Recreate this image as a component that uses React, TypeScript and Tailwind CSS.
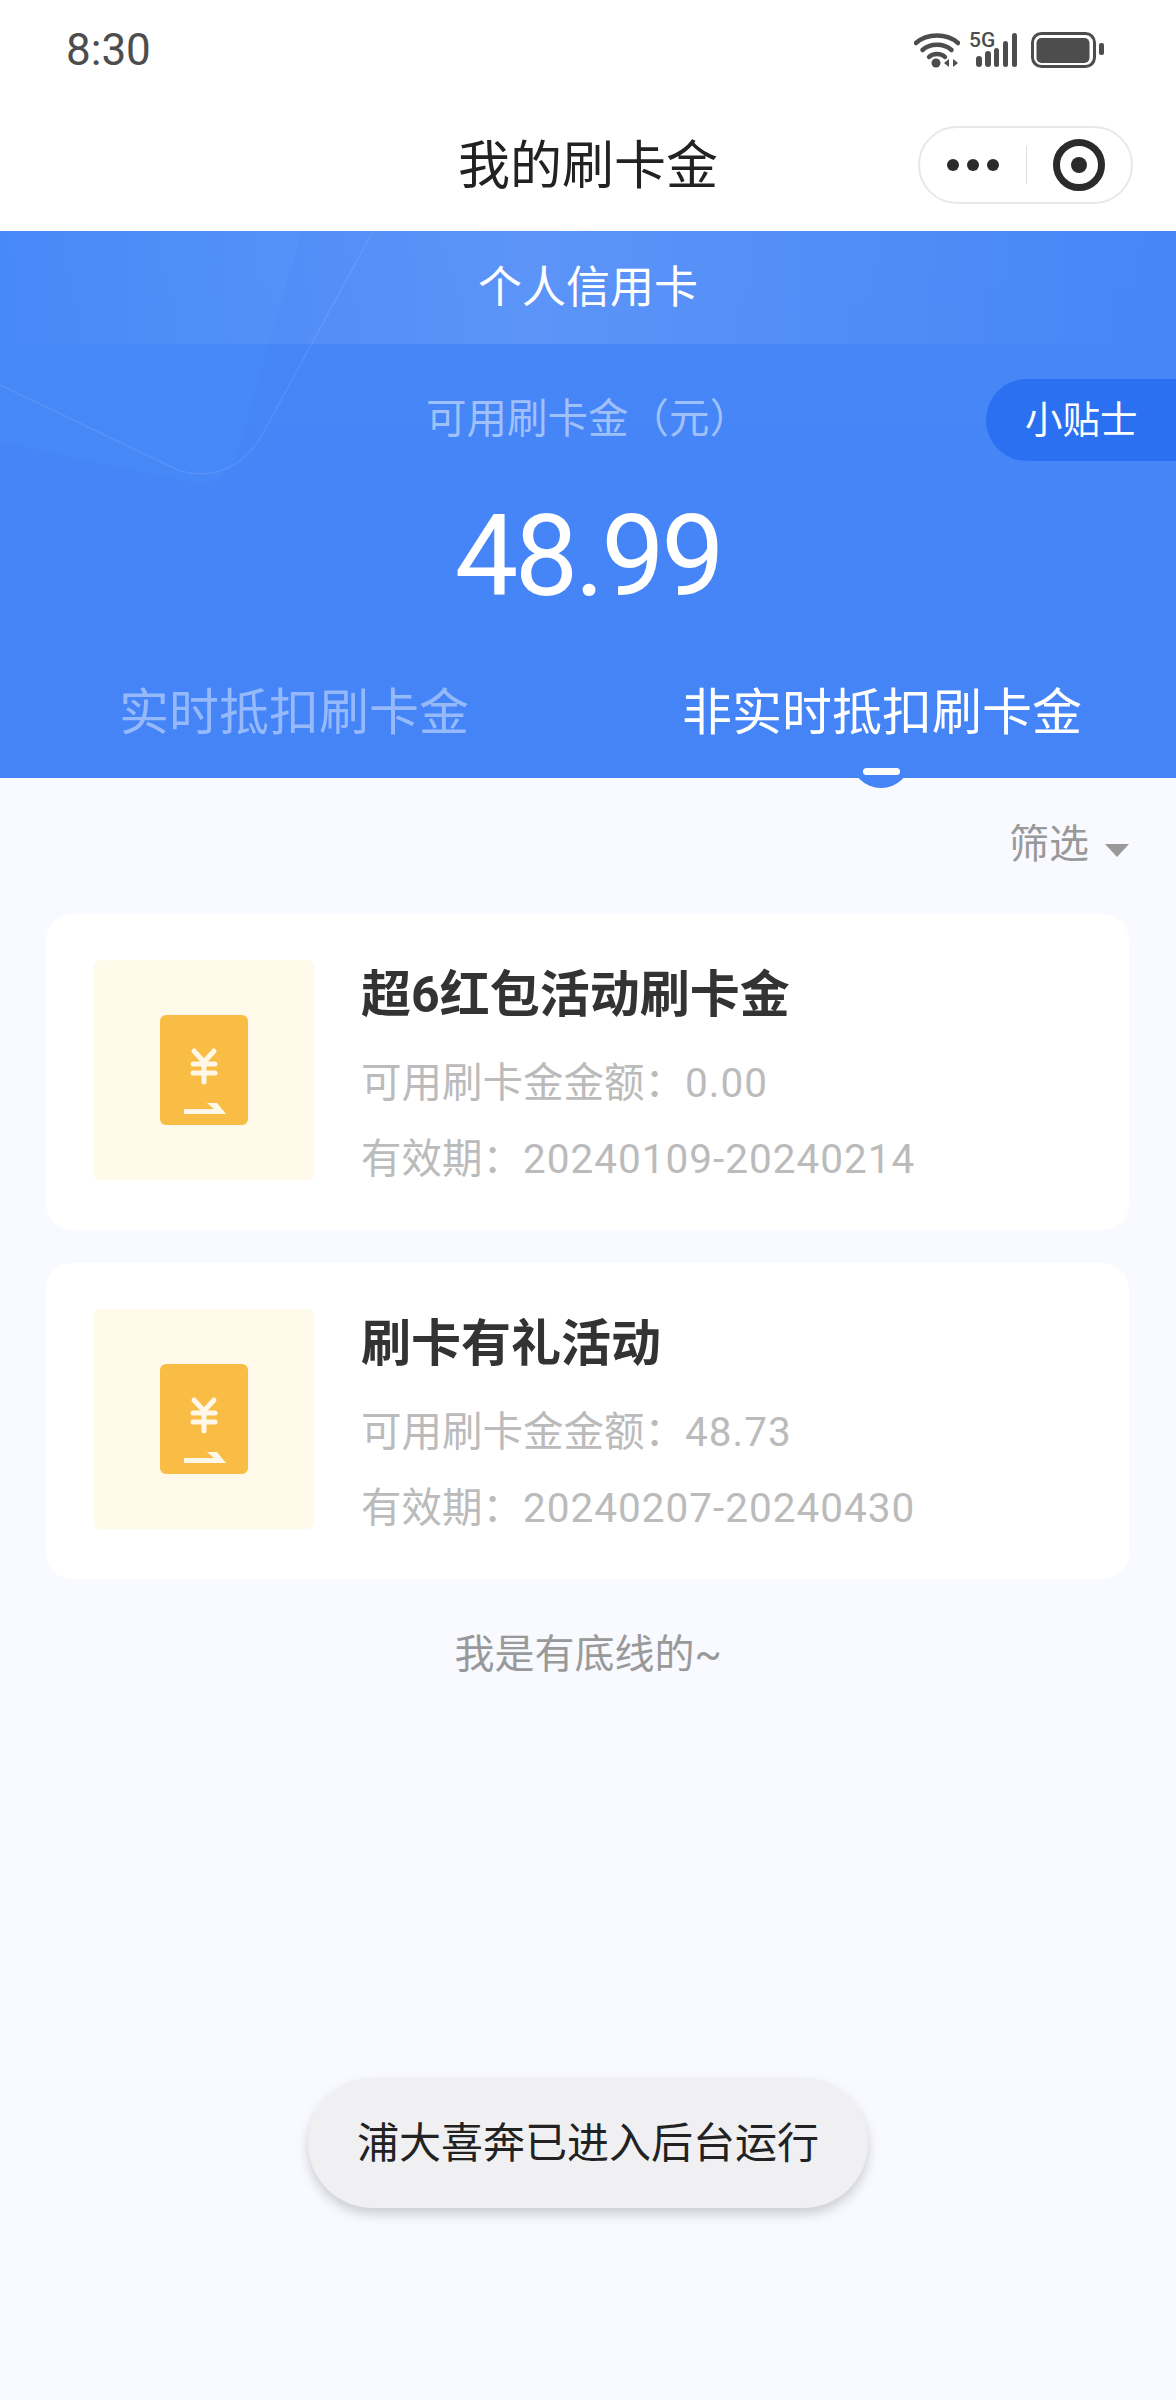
import React from 'react';

const CARDS = [
  { id: 1, title: '超6红包活动刷卡金', amount: '0.00', period: '20240109-20240214' },
  { id: 2, title: '刷卡有礼活动', amount: '48.73', period: '20240207-20240430' },
];

const WifiIcon = () => (
  <svg width="46" height="36" viewBox="0 0 46 36" fill="none" stroke="#4d4d4d" strokeLinecap="round">
    <path d="M2 11 C 13 1, 33 1, 44 11" strokeWidth="4.500" />
    <path d="M8.500 18 C 16 11, 30 11, 37.500 18" strokeWidth="4.500" />
    <path d="M15 25 C 19 21, 27 21, 31 25" strokeWidth="4.500" />
    <circle cx="22" cy="31" r="4.500" fill="#4d4d4d" stroke="none" />
    <path d="M35 27 L35 35 L30 31 Z" fill="#4d4d4d" stroke="none" />
    <path d="M39 27 L39 35 L44 31 Z" fill="#4d4d4d" stroke="none" />
  </svg>
);

const SignalBars = () => (
  <svg width="44" height="36" viewBox="0 0 44 36" fill="#4d4d4d">
    <rect x="2" y="24" width="6" height="11" rx="3" />
    <rect x="11" y="19" width="6" height="16" rx="3" />
    <rect x="20" y="16" width="5" height="19" rx="2.500" />
    <rect x="29" y="9" width="5" height="26" rx="2.500" />
    <rect x="38" y="1" width="5" height="34" rx="2.500" />
  </svg>
);

const BatteryIcon = () => (
  <svg width="74" height="37" viewBox="0 0 74 37" fill="#4d4d4d">
    <rect x="1.500" y="1.500" width="62" height="33" rx="9" fill="none" stroke="#4d4d4d" strokeWidth="3" />
    <rect x="5.500" y="6" width="53" height="25" rx="5" />
    <rect x="68" y="11" width="5" height="12" rx="2" />
  </svg>
);

const TicketIcon = () => (
  <svg width="88" height="110" viewBox="0 0 88 110">
    <rect width="88" height="110" rx="6" fill="#f9bc45" />
    <g stroke="#fff8e8" strokeWidth="5" fill="none" strokeLinecap="round">
      <path d="M34 36 L44 47 L54 36" />
      <path d="M33 49 H55" />
      <path d="M33 58 H55" />
      <path d="M44 47 V67" />
    </g>
    <path d="M24 94 H54 L47 88 H57 L66 99 H24 Z" fill="#fff8e8" />
  </svg>
);

const BackgroundLines = () => (
  <svg className="absolute top-0 left-0" width="420" height="270" viewBox="0 0 420 270" fill="none">
    <path d="M302 0 L236 226 C 230 246 212 256 190 251 L0 211 V0 Z" fill="#5a9cff" fillOpacity="0.15" />
    <path d="M373 0 L262 204 C 246 232 218 250 180 240 L0 154" stroke="#ffffff" strokeOpacity="0.09" strokeWidth="1.500" />
  </svg>
);

const CouponCard = ({ title, amount, period }: { title: string; amount: string; period: string }) => (
  <div className="flex h-[316px] items-start gap-[47px] rounded-[26px] bg-white pl-[48px]">
    <div className="mt-[46px] flex h-[220px] w-[220px] items-center justify-center rounded-[6px] bg-[#fff9e9]">
      <TicketIcon />
    </div>
    <div className="mt-[46px] flex flex-col">
      <div className="text-[50px] leading-[70px] font-bold text-[#333333]">{title}</div>
      <div className="mt-[15px] text-[40.500px] leading-[76px] text-[#bbbbbb]">
        可用刷卡金金额：<span className="tracking-[1px]">{amount}</span>
      </div>
      <div className="text-[40.500px] leading-[76px] text-[#bbbbbb]">
        有效期：<span className="tracking-[1px]">{period}</span>
      </div>
    </div>
  </div>
);

const App: React.FC = () => {
  return (
    <div className="relative h-[2400px] overflow-hidden bg-[#f8faff] [font-family:Roboto,'Noto_Sans_CJK_SC',sans-serif]">
      {/* status bar */}
      <div className="flex h-[100px] items-center justify-between bg-white pr-[71px] pl-[66px]">
        <span className="text-[44px] text-[#4d4d4d]">8:30</span>
        <div className="flex items-center">
          <WifiIcon />
          <div className="relative ml-[14px]">
            <SignalBars />
            <span className="absolute -top-[4px] -left-[5px] text-[21px] leading-[24px] font-medium text-[#4d4d4d]">5G</span>
          </div>
          <div className="ml-[13px]">
            <BatteryIcon />
          </div>
        </div>
      </div>

      {/* nav */}
      <div className="relative flex h-[131px] items-center justify-center bg-white pt-[2px]">
        <span className="text-[52px] text-[#222222]">我的刷卡金</span>
        <div className="absolute top-[26px] right-[43px] flex h-[78px] w-[215px] items-center rounded-full border-2 border-[#e8e8e8] bg-white">
          <div className="flex w-[106px] justify-center gap-[8px]">
            <span className="h-[12px] w-[12px] rounded-full bg-[#2b2b2b]" />
            <span className="h-[12px] w-[12px] rounded-full bg-[#2b2b2b]" />
            <span className="h-[12px] w-[12px] rounded-full bg-[#2b2b2b]" />
          </div>
          <div className="h-[38px] w-px bg-[#e0e0e0]" />
          <div className="flex flex-1 justify-center">
            <div className="flex h-[52px] w-[52px] items-center justify-center rounded-full border-[7px] border-[#2b2b2b]">
              <div className="h-[16px] w-[16px] rounded-full bg-[#2b2b2b]" />
            </div>
          </div>
        </div>
      </div>

      {/* blue header */}
      <div className="relative h-[547px] bg-gradient-to-b from-[#4686f7] to-[#4484f6]">
        <BackgroundLines />
        <div className="relative flex h-[113px] items-center justify-center bg-gradient-to-r from-[#ffffff00] via-[#ffffff1f] via-45% to-[#ffffff00] text-[44px] text-white">
          个人信用卡
        </div>
        <div className="absolute top-[148px] right-0 flex h-[82px] w-[190px] items-center rounded-l-[41px] bg-[#2a70f0] pl-[39px] text-[37.500px] text-white">
          小贴士
        </div>
        <div className="relative mt-[40px] text-center text-[40.500px] leading-[70px] text-[#9fc0fa]">可用刷卡金（元）</div>
        <div className="relative mt-[38px] text-center text-[113px] leading-[130px] tracking-[-3.500px] text-white">48.99</div>
        <div className="relative mt-[56px] flex items-center text-[50px] leading-[70px]">
          <div className="w-[588px] text-center text-[#95b9fa]">实时抵扣刷卡金</div>
          <div className="w-[588px] text-center text-white">非实时抵扣刷卡金</div>
        </div>
        <div className="absolute right-[265px] -bottom-[10px] flex h-[30px] w-[60px] justify-center overflow-hidden rounded-b-[30px] bg-[#4484f6] pt-[10px]">
          <div className="h-[7px] w-[37px] rounded-full bg-white" />
        </div>
      </div>

      {/* filter */}
      <div className="flex h-[135px] items-center justify-end pr-[47px] pb-[2px]">
        <span className="text-[40px] text-[#999999]">筛选</span>
        <span className="mt-[12px] ml-[16px] h-0 w-0 border-x-[12px] border-t-[13px] border-x-transparent border-t-[#999999]" />
      </div>

      {/* list */}
      <div className="mt-[1px] flex flex-col gap-[33px] pr-[47px] pl-[46px]">
        {CARDS.map((card) => (
          <CouponCard key={card.id} title={card.title} amount={card.amount} period={card.period} />
        ))}
      </div>
      <div className="mt-[48px] text-center text-[40px] leading-[56px] text-[#999999]">我是有底线的~</div>

      {/* toast */}
      <div className="absolute top-[2078px] left-[308px] flex h-[130px] w-[560px] items-center justify-center rounded-full bg-[#f0f0f2] text-[42px] text-[#222222] shadow-[0_6px_12px_rgba(0,0,0,0.18)]">
        浦大喜奔已进入后台运行
      </div>
    </div>
  );
};

export default App;
